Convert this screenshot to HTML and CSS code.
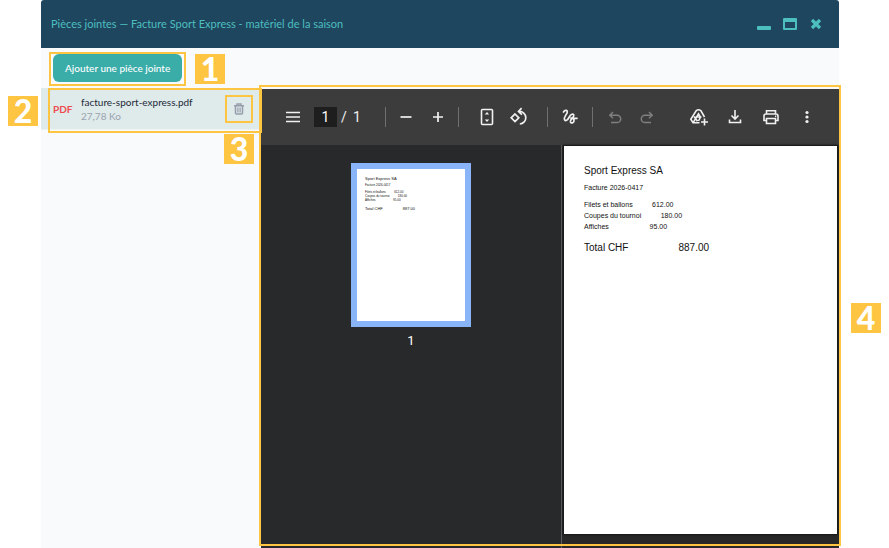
FILE: index.html
```html
<!DOCTYPE html>
<html lang="fr">
<head>
<meta charset="utf-8">
<meta name="viewport" content="width=device-width, initial-scale=1">
<title>Pièces jointes</title>
<link rel="stylesheet" href="styles.css">
</head>
<body>
<main class="window">
  <header class="titlebar">
    <h1 class="title">Pièces jointes — Facture Sport Express - matériel de la saison</h1>
    <div class="window-controls">
      <button type="button" aria-label="Réduire"><svg width="14" height="14" viewBox="0 0 14 14"><rect y="9" width="14" height="4" rx="1" fill="currentColor"/></svg></button>
      <button type="button" aria-label="Agrandir"><svg width="14" height="14" viewBox="0 0 14 14"><path fill="currentColor" fill-rule="evenodd" d="M1 1h12a1 1 0 0 1 1 1v10a1 1 0 0 1-1 1H1a1 1 0 0 1-1-1V2a1 1 0 0 1 1-1zM2 5v6h10V5z"/></svg></button>
      <button type="button" aria-label="Fermer"><svg width="14" height="14" viewBox="0 0 14 14"><path stroke="currentColor" stroke-width="3.2" d="M3 3l8 8M11 3l-8 8"/></svg></button>
    </div>
  </header>
  <div class="actions">
    <div class="marked">
      <button type="button" class="add">Ajouter une pièce jointe</button>
      <span class="frame frame-add"></span>
      <span class="badge badge-add">1</span>
    </div>
  </div>
  <div class="content">
    <aside class="sidebar">
      <div class="file">
        <span class="file-type">PDF</span>
        <div class="file-info">
          <span class="file-name">facture-sport-express.pdf</span>
          <span class="file-size">27,78 Ko</span>
        </div>
        <button type="button" class="delete" aria-label="Supprimer"><svg width="10" height="12" viewBox="0 0 10 12" fill="none" stroke="currentColor"><path stroke-width="1.4" d="M0 2.8h10M3 2.500V1h4v1.500"/><path stroke-width="1.500" d="M1.500 3v7q0 1 1 1h5q1 0 1-1V3"/><path stroke-width="1.200" d="M3.900 4.500v5M6.100 4.500v5"/></svg></button>
        <span class="frame frame-file"></span>
        <span class="badge badge-file">2</span>
        <span class="badge badge-delete">3</span>
      </div>
    </aside>
    <section class="viewer">
      <div class="pdf-toolbar">
        <div class="tools">
          <button type="button" class="tool menu" aria-label="Menu"><svg width="20" height="20" viewBox="0 0 20 20"><path stroke="currentColor" stroke-width="1.7" d="M3 5.5h14M3 10h14M3 14.5h14"/></svg></button>
          <input class="page-input" type="text" value="1" aria-label="Page">
          <span class="slash">/</span>
          <span class="page-total">1</span>
          <span class="separator"></span>
          <div class="tool-group zoom-tools">
            <button type="button" class="tool" aria-label="Zoom arrière"><svg width="20" height="20" viewBox="0 0 20 20"><path stroke="currentColor" stroke-width="1.7" d="M4.500 10h11"/></svg></button>
            <button type="button" class="tool" aria-label="Zoom avant"><svg width="20" height="20" viewBox="0 0 20 20"><path stroke="currentColor" stroke-width="1.7" d="M5 10h10M10 5v10"/></svg></button>
          </div>
          <span class="separator"></span>
          <div class="tool-group view-tools">
            <button type="button" class="tool" aria-label="Ajuster"><svg width="20" height="20" viewBox="0 0 20 20"><rect x="4.500" y="2.500" width="11" height="15" rx="1" fill="none" stroke="currentColor" stroke-width="1.6"/><path fill="currentColor" d="M10 5l2.200 2.600H7.800zM10 15l2.200-2.600H7.800z"/></svg></button>
            <button type="button" class="tool" aria-label="Pivoter"><svg width="20" height="20" viewBox="0 0 20 20" fill="none" stroke="currentColor" stroke-width="1.700"><path d="M6 7l3.800 3.800L6 14.600 2.200 10.800zM10.200 4.400a6.300 6.300 0 1 1 .6 12.600M12.600 1.200L9.500 4.400l3.400 3.200"/></svg></button>
          </div>
          <span class="separator"></span>
          <button type="button" class="tool" aria-label="Dessiner"><svg width="20" height="20" viewBox="0 0 20 20"><path fill="none" stroke="currentColor" stroke-width="1.700" stroke-linecap="round" d="M3.500 5C5 2.500 7.800 3 7.200 5.500 6.500 8 3.500 10 4.500 12.700 5.500 15 8 12.500 9.300 10 11 6.800 13.300 6.500 13.800 8 14.400 10.500 9.600 12.500 10.400 15 11.200 17 14.500 15.500 14 12.800 13.700 11 11.800 11.200 11 11.200M12 11.300h5"/></svg></button>
          <span class="separator"></span>
          <button type="button" class="tool" disabled aria-label="Annuler"><svg width="20" height="20" viewBox="0 0 20 20"><path fill="none" stroke="currentColor" stroke-width="1.500" d="M8 5L4.800 8.200l3.200 3M4.800 8.200h7.200a3.700 3.700 0 0 1 0 7.400H6"/></svg></button>
          <button type="button" class="tool" disabled aria-label="Rétablir"><svg width="20" height="20" viewBox="0 0 20 20"><path fill="none" stroke="currentColor" stroke-width="1.500" d="M12 5l3.200 3.200-3.200 3M15.200 8.200H8a3.700 3.700 0 0 0 0 7.400h6"/></svg></button>
        </div>
        <div class="file-tools">
          <button type="button" class="tool" aria-label="Enregistrer dans Drive"><svg width="20" height="20" viewBox="0 0 20 20" fill="none" stroke="currentColor" stroke-width="1.600"><path d="M10.500 15.800H4L1.800 12.300 7.300 3.600Q9.500 2 11.800 3.600L15.500 10M4 15.800l5.500-9 2.400 4M5 9.500l3.500 4.700M6.500 10h6M9.500 14l2-3.800M15.500 11.500v7M12 15h7"/></svg></button>
          <button type="button" class="tool" aria-label="Télécharger"><svg width="20" height="20" viewBox="0 0 20 20" fill="none" stroke="currentColor" stroke-width="1.600"><path d="M10 3v9M6.500 8.500L10 12l3.500-3.500M4.500 12.500v3h11v-3"/></svg></button>
          <button type="button" class="tool" aria-label="Imprimer"><svg width="20" height="20" viewBox="0 0 20 20" fill="none" stroke="currentColor" stroke-width="1.600"><path d="M5.500 7V3.800h9V7M5.500 13.500H3V9q0-2 2-2h10q2 0 2 2v4.500h-2.500M5.500 11.500h9v5h-9z"/><path d="M14 9.300h1.300"/></svg></button>
          <button type="button" class="tool" aria-label="Plus"><svg width="20" height="20" viewBox="0 0 20 20" fill="currentColor"><circle cx="10" cy="5.500" r="1.600"/><circle cx="10" cy="10" r="1.600"/><circle cx="10" cy="14.500" r="1.600"/></svg></button>
        </div>
      </div>
      <div class="panes">
        <div class="thumbnails">
          <div class="thumbnail">
            <p class="large">Sport Express SA</p>
            <p class="reference">Facture 2026-0417</p>
            <p>Filets et ballons          612.00</p>
            <p>Coupes du tournoi          180.00</p>
            <p>Affiches                     95.00</p>
            <p class="large total">Total CHF                  887.00</p>
          </div>
          <span class="thumbnail-label">1</span>
        </div>
        <div class="document">
          <article class="sheet">
            <p class="large">Sport Express SA</p>
            <p class="reference">Facture 2026-0417</p>
            <p>Filets et ballons          612.00</p>
            <p>Coupes du tournoi          180.00</p>
            <p>Affiches                     95.00</p>
            <p class="large total">Total CHF                  887.00</p>
          </article>
        </div>
      </div>
      <span class="frame frame-viewer"></span>
      <span class="badge badge-viewer">4</span>
    </section>
  </div>
</main>
</body>
</html>
```
FILE: styles.css
```css
* { box-sizing: border-box; }
body { margin: 0; background: #fff; font-family: Lato, sans-serif; }
p { margin: 0; white-space: pre; }
button { border: 0; padding: 0; background: none; font: inherit; color: inherit; }
svg { display: block; }

.window {
  display: flex;
  flex-direction: column;
  min-height: 100vh;
  margin: 0 50px 0 41px;
  background: #f9fafc;
  border-radius: 3px 3px 0 0;
}
.titlebar {
  display: flex;
  align-items: center;
  justify-content: space-between;
  height: 48px;
  padding: 0 16px 0 10px;
  background: #1f465f;
  color: #4dbfbf;
  border-radius: 3px 3px 0 0;
}
.title { margin: 0; font-size: 11px; font-weight: 400; line-height: 16px; }
.window-controls { display: flex; gap: 12px; }

.actions { display: flex; height: 40px; padding: 6px 12px; }
.marked { position: relative; }
.add {
  height: 28px;
  padding: 0 12px;
  border-radius: 6px;
  background: #3aada9;
  color: #fff;
  font-size: 10px;
  font-weight: 500;
}

.content { display: flex; flex: 1; }
.sidebar { width: 220px; flex: none; }
.file {
  position: relative;
  display: flex;
  align-items: center;
  height: 42px;
  padding: 0 15px 0 12px;
  background: #dfeaea;
  border-bottom: 1px solid #edf2f3;
}
.file-type { width: 28px; color: #ee4b4f; font-size: 10px; font-weight: 700; }
.file-info { display: flex; flex: 1; flex-direction: column; font-size: 10px; line-height: 14px; }
.file-name { color: #1d2939; white-space: nowrap; }
.file-size { color: #9aa3b0; }
.delete {
  display: grid;
  place-items: center;
  flex: none;
  width: 28px;
  height: 28px;
  margin-right: -7px;
  border: 2px solid #fdc541;
  color: #959dac;
}

.viewer {
  position: relative;
  display: flex;
  flex: 1;
  flex-direction: column;
  min-width: 0;
  margin-top: 1px;
  background: #28292a;
}
.pdf-toolbar {
  display: flex;
  justify-content: space-between;
  height: 56px;
  padding: 0 22px;
  background: #3c3c3c;
  color: #f1f1f1;
  font-family: Roboto, sans-serif;
  font-size: 14px;
}
.tools, .file-tools, .tool-group { display: flex; align-items: center; }
.tools, .tool-group { gap: 12px; }
.file-tools { gap: 16px; }
.zoom-tools { margin: 0 -2px; }
.view-tools { margin: 0 6px; }
.tool { flex: none; }
.tool:disabled { color: #7f7f7f; }
.page-input {
  width: 23px;
  height: 20px;
  margin-right: -8px;
  padding: 0;
  border: 0;
  background: #1e1e1e;
  color: #fff;
  font: inherit;
  text-align: center;
}
.menu { margin-right: -1px; }
.slash { width: 5px; margin-right: -5px; }
.page-total { width: 8px; margin-right: 12px; }
.separator { width: 1px; height: 20px; background: #707070; }

.panes { display: flex; flex: 1; }
.thumbnails {
  display: flex;
  flex: none;
  flex-direction: column;
  align-items: center;
  width: 301px;
  padding-top: 18px;
  border-right: 1px solid #5c5d5e;
}
.thumbnail, .sheet {
  overflow: hidden;
  background: #fff;
  color: #111;
  font-family: "Liberation Sans", sans-serif;
}
.thumbnail {
  width: 120px;
  height: 164px;
  padding: 8px;
  border: 6px solid #8ab4f8;
  font-size: 3px;
  line-height: 4px;
}
.thumbnail .large { font-size: 4px; }
.thumbnail .reference { margin: 2px 0 3px; }
.thumbnail .total { margin-top: 5px; }
.thumbnail-label { margin-top: 6px; color: #fff; font-family: Roboto, sans-serif; font-size: 13px; line-height: 16px; }
.document { flex: 1; min-width: 0; padding: 1px 2px 0; background: #282828; }
.sheet {
  aspect-ratio: 273 / 388;
  padding: 19px 20px;
  box-shadow: 0 0 2px 1px #161616;
  font-size: 7px;
  line-height: 11px;
}
.sheet .large { font-size: 10px; line-height: 12px; }
.sheet .reference { margin: 5px 0 6px; }
.sheet .total { margin-top: 10px; }

.frame { position: absolute; border: 2px solid #fdc541; pointer-events: none; }
.frame-add { inset: -2px -4px -4px; }
.frame-file { inset: 0 -1px -4px 7px; z-index: 1; }
.frame-viewer { inset: -4px -2px 2px; }
.badge {
  position: absolute;
  z-index: 2;
  width: 30px;
  height: 30px;
  background: #fdc541;
  color: #fff;
  font-size: 32px;
  font-weight: 900;
  line-height: 30px;
  text-align: center;
}
.badge-add { top: 0; left: 142px; }
.badge-file { top: 8px; left: -33px; }
.badge-delete { top: 46px; right: 7px; }
.badge-viewer { top: 214px; right: -42px; }
```
